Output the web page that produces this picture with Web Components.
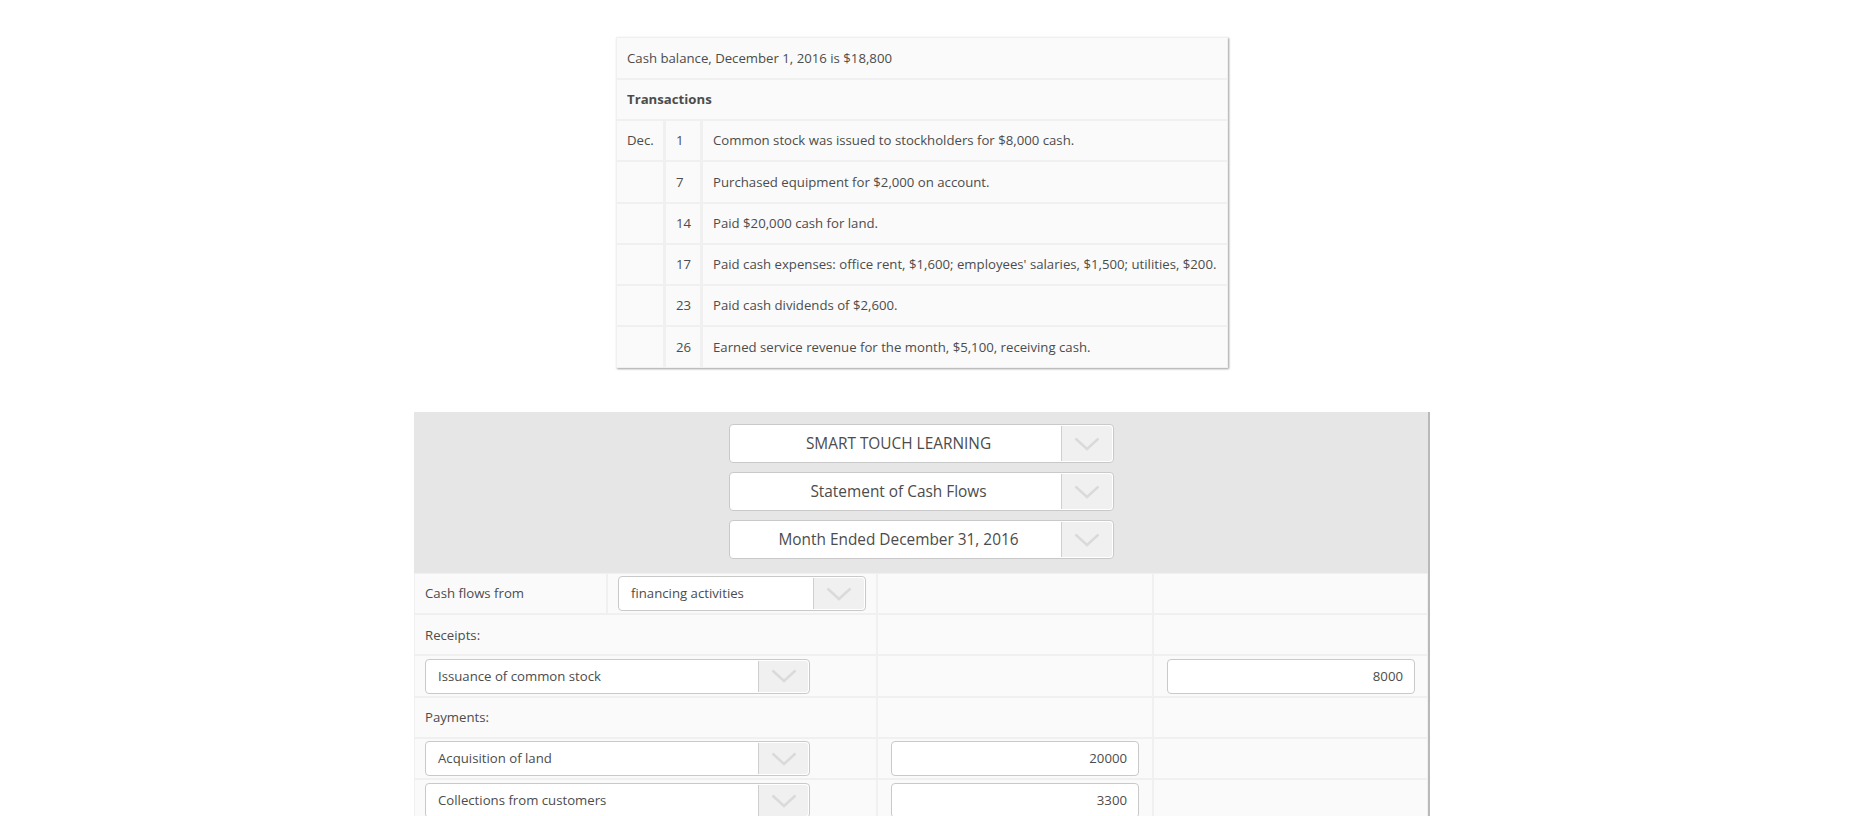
<!DOCTYPE html>
<html lang="en"><head><meta charset="utf-8"><title>Statement of Cash Flows</title>
<style>
html,body{margin:0;height:816px;overflow:hidden;background:#fff}
body{font-family:"Open Sans","Liberation Sans",sans-serif;color:#4c4c4c;font-size:13.2px}
</style></head><body>
<worksheet-page>
  <sheet-grid class="problem" style="--cols:46px 34px 524px;--rows:40px 39px 39px 40px 39px 39px 39px 40px;--gapx:3px">
    <sheet-cell span="3">Cash balance, December 1, 2016 is $18,800</sheet-cell>
    <sheet-cell span="3"><b>Transactions</b></sheet-cell>
    <sheet-cell>Dec.</sheet-cell><sheet-cell>1</sheet-cell><sheet-cell>Common stock was issued to stockholders for $8,000 cash.</sheet-cell>
    <sheet-cell></sheet-cell><sheet-cell>7</sheet-cell><sheet-cell>Purchased equipment for $2,000 on account.</sheet-cell>
    <sheet-cell></sheet-cell><sheet-cell>14</sheet-cell><sheet-cell>Paid $20,000 cash for land.</sheet-cell>
    <sheet-cell></sheet-cell><sheet-cell>17</sheet-cell><sheet-cell>Paid cash expenses: office rent, $1,600; employees' salaries, $1,500; utilities, $200.</sheet-cell>
    <sheet-cell></sheet-cell><sheet-cell>23</sheet-cell><sheet-cell>Paid cash dividends of $2,600.</sheet-cell>
    <sheet-cell></sheet-cell><sheet-cell>26</sheet-cell><sheet-cell>Earned service revenue for the month, $5,100, receiving cash.</sheet-cell>
  </sheet-grid>
  <statement-panel>
    <heading-select slot="heading">SMART TOUCH LEARNING</heading-select>
    <heading-select slot="heading">Statement of Cash Flows</heading-select>
    <heading-select slot="heading">Month Ended December 31, 2016</heading-select>
    <sheet-grid class="statement" style="--cols:191px 268px 274px 273px;--rows:39px 39px 40px 39px 39px 60px;--gapx:2px">
      <sheet-cell>Cash flows from</sheet-cell><sheet-cell tight><pick-box style="--box:248px;--a:50px">financing activities</pick-box></sheet-cell><sheet-cell></sheet-cell><sheet-cell></sheet-cell>
      <sheet-cell span="2" flat>Receipts:</sheet-cell><sheet-cell></sheet-cell><sheet-cell></sheet-cell>
      <sheet-cell span="2" flat><pick-box style="--box:385px">Issuance of common stock</pick-box></sheet-cell><sheet-cell></sheet-cell><sheet-cell flat style="padding-left:13px"><amount-box>8000</amount-box></sheet-cell>
      <sheet-cell span="2">Payments:</sheet-cell><sheet-cell></sheet-cell><sheet-cell></sheet-cell>
      <sheet-cell span="2" flat><pick-box style="--box:385px">Acquisition of land</pick-box></sheet-cell><sheet-cell flat style="padding-left:13px"><amount-box>20000</amount-box></sheet-cell><sheet-cell></sheet-cell>
      <sheet-cell span="2" top><pick-box style="--box:385px">Collections from customers</pick-box></sheet-cell><sheet-cell top style="padding-left:13px"><amount-box>3300</amount-box></sheet-cell><sheet-cell></sheet-cell>
    </sheet-grid>
  </statement-panel>
</worksheet-page>
<script>
const chevron = '<svg width="26" height="14" viewBox="0 0 26 14" aria-hidden="true"><path d="M1.5 1.5 13 12 24.5 1.5" fill="none" stroke="#dadada" stroke-width="2.5"/></svg>';
function def(name, html){
  customElements.define(name, class extends HTMLElement{
    constructor(){super();this.attachShadow({mode:'open'}).innerHTML=html;}
    connectedCallback(){const s=this.getAttribute('span');if(s)this.style.gridColumn='span '+s;}
  });
}
def('worksheet-page',`<style>:host{display:flex;flex-direction:column;align-items:center;gap:44px;width:1844px;padding-top:37px}
</style><slot></slot>`);
def('sheet-grid',`<style>:host{display:grid;box-sizing:border-box;grid-template-columns:var(--cols);grid-template-rows:var(--rows);column-gap:var(--gapx);row-gap:2px;background:#f0f0f0;padding:1px 1px 0 1px}
:host(.problem){box-shadow:1px 1px 2px rgba(0,0,0,.38);width:612px;height:331px}
:host(.statement){width:1014px}
</style><slot></slot>`);
def('sheet-cell',`<style>:host{display:flex;align-items:center;background:#fafafa;padding:0 9px 1px 10px;min-width:0;white-space:nowrap;overflow:hidden}
:host([flat]){padding-bottom:0}
:host([tight]){padding:0 0 0 10px}
:host([top]){align-items:flex-start;padding-top:3px}
</style><slot></slot>`);
def('statement-panel',`<style>:host{display:block;width:1016px;box-sizing:border-box;background:#e6e6e6;border-right:2px solid #b9b9b9}
.head{display:flex;flex-direction:column;align-items:center;gap:9px;padding:12px 0 14px}
</style><div class="head"><slot name="heading"></slot></div><slot></slot>`);
def('heading-select',`<style>:host{display:flex;width:385px;height:39px;box-sizing:border-box;background:#fff;border:1px solid #c9c9c9;border-radius:4px;font-size:15.4px;color:#4c4c4c}
.t{flex:1;display:flex;align-items:center;justify-content:center;padding:0 0 1px 8px}
.a{width:50px;margin:1px;border-left:1px solid #cfcfcf;background:#f0f0f0;border-radius:0 3px 3px 0;display:flex;align-items:center;justify-content:center}
</style><div class="t"><slot></slot></div><div class="a">${chevron}</div>`);
def('pick-box',`<style>:host{display:flex;width:var(--box);height:35px;box-sizing:border-box;background:#fff;border:1px solid #c9c9c9;border-radius:4px}
.t{flex:1;display:flex;align-items:center;padding:0 0 1px 12px;min-width:0}
.a{width:var(--a,49px);margin:1px;border-left:1px solid #cfcfcf;background:#f0f0f0;border-radius:0 3px 3px 0;display:flex;align-items:center;justify-content:center}
</style><div class="t"><slot></slot></div><div class="a">${chevron}</div>`);
def('amount-box',`<style>:host{display:flex;width:248px;height:35px;box-sizing:border-box;background:#fff;border:1px solid #c9c9c9;border-radius:4px;align-items:center;justify-content:flex-end;padding:0 11px 1px 0}
</style><slot></slot>`);
</script>
</body></html>
